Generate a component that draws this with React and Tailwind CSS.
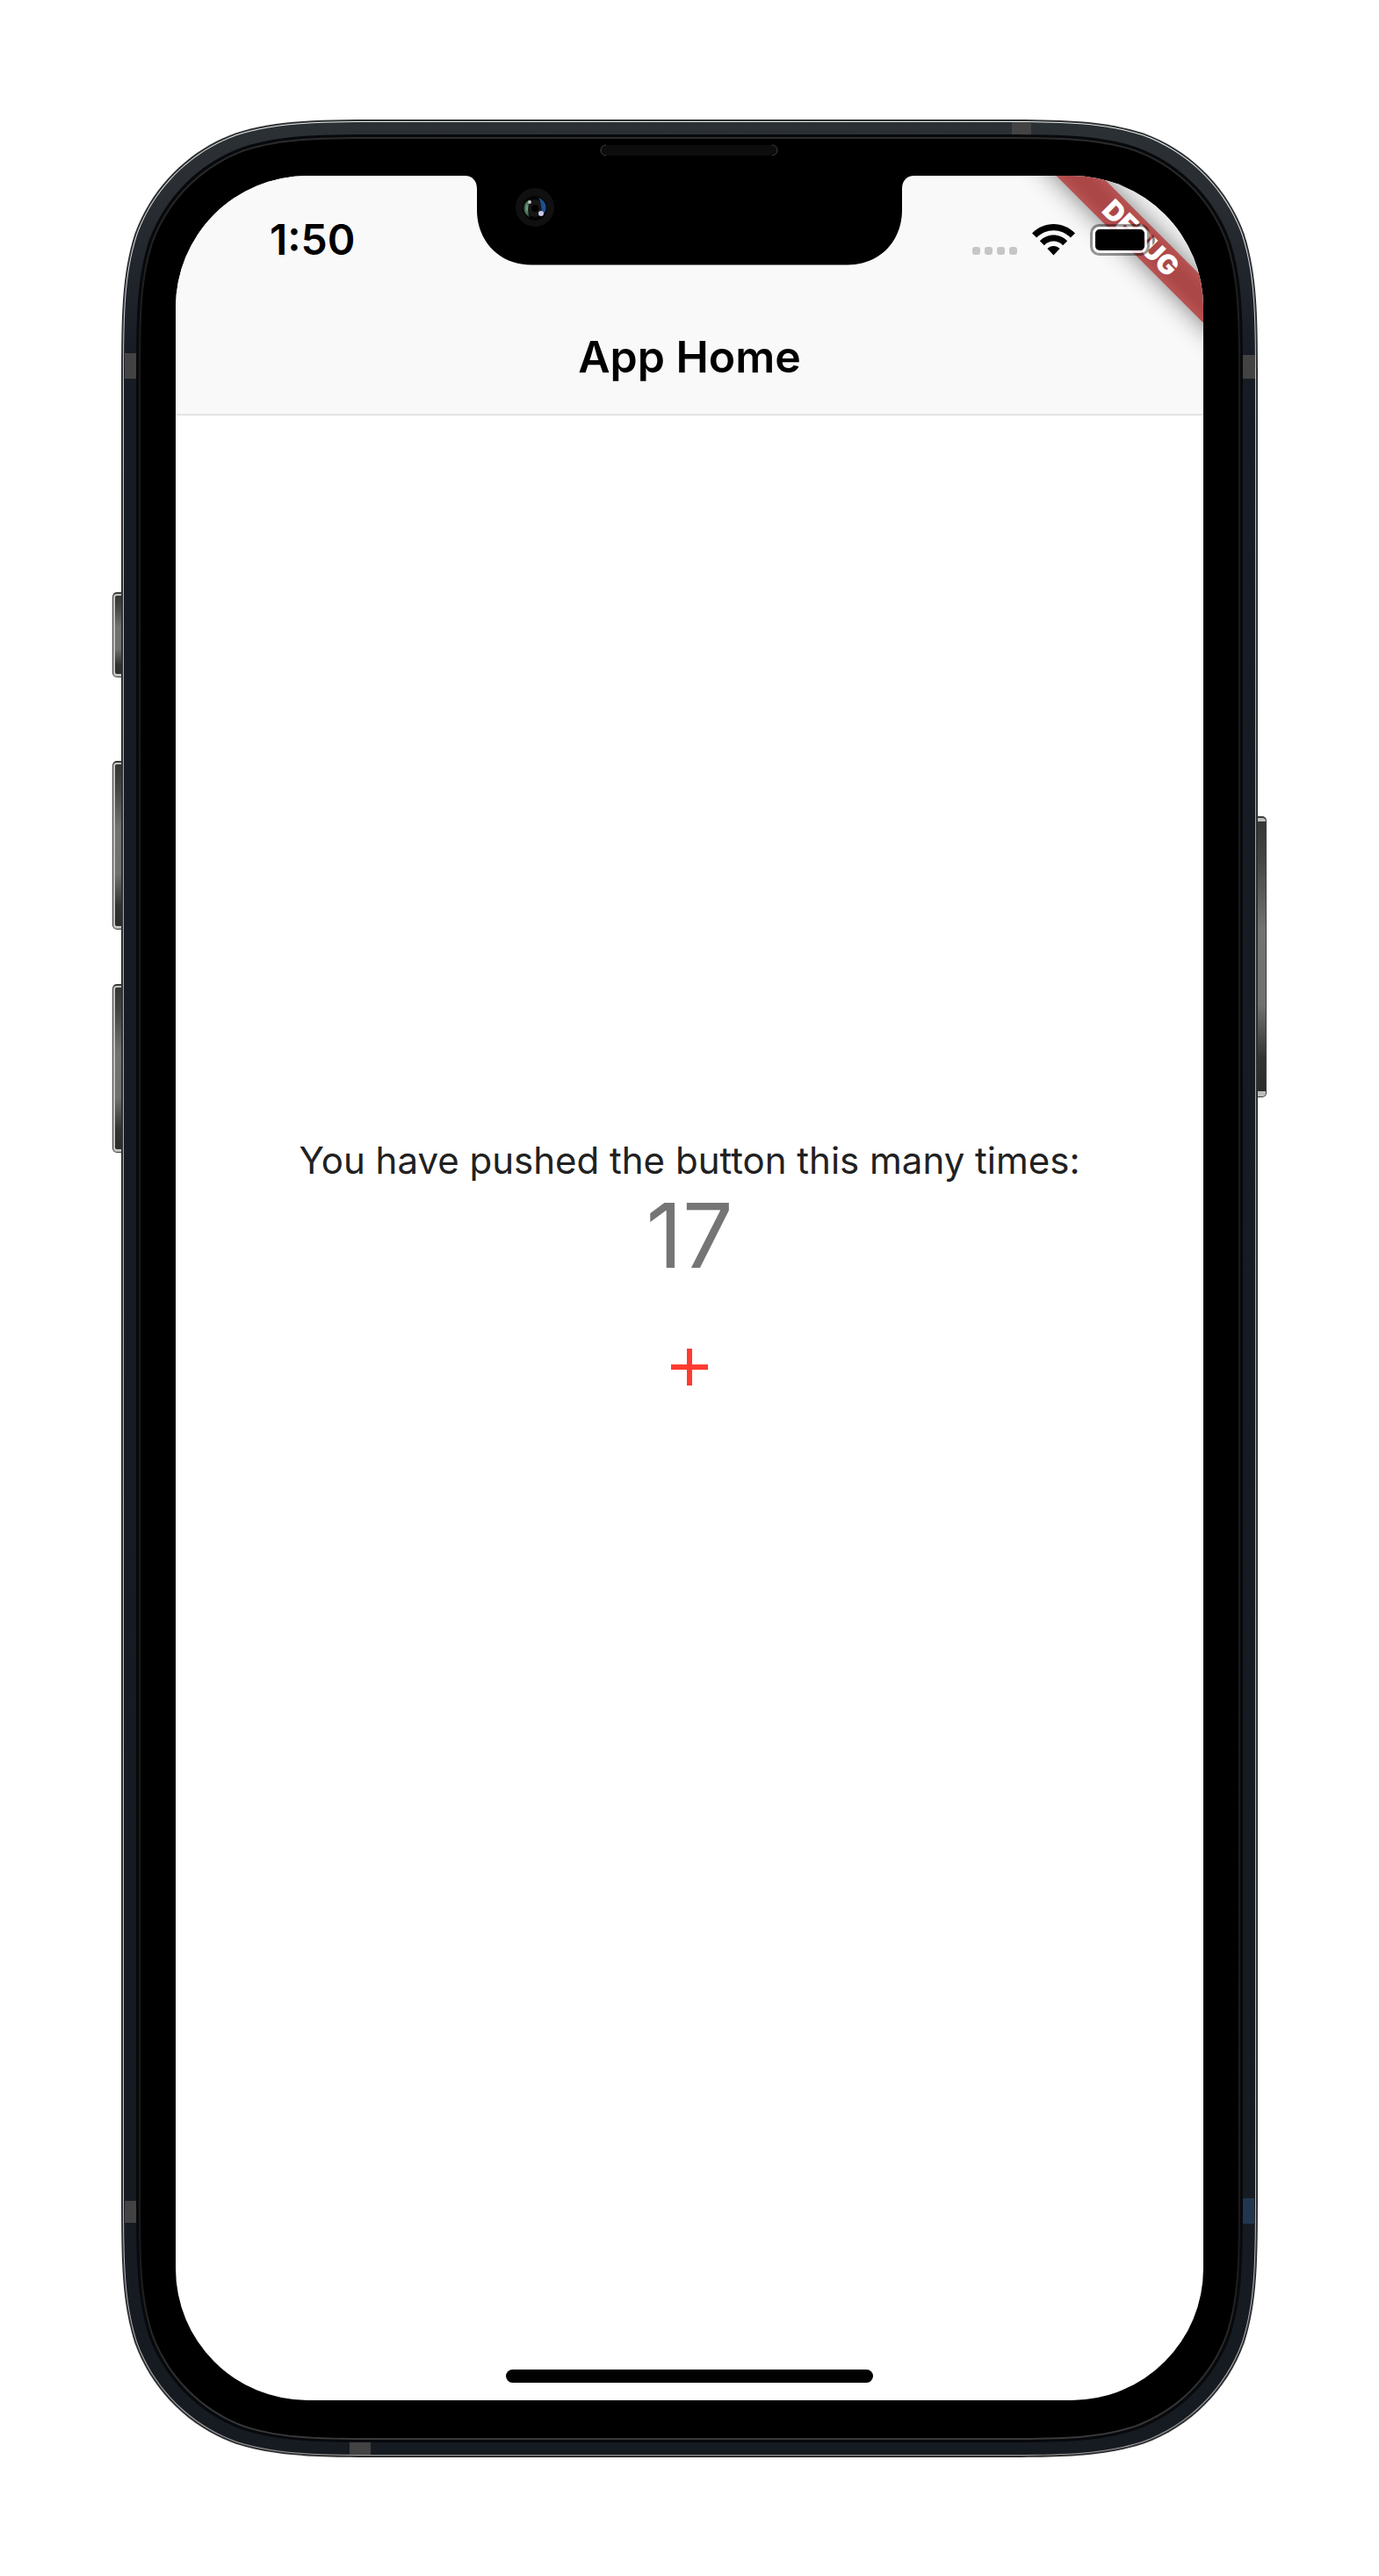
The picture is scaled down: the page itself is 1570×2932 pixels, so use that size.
import { useState } from "react";

const W = 1294;
const H = 2661;

/* Rounded rectangle with continuous-curvature corners, inset from the body. */
function squircle(inset, r) {
  const l = inset;
  const t = inset;
  const R = W - inset;
  const B = H - inset;
  const k = (n) => n * r;
  const a = k(1.528665), b = k(1.088493), c = k(0.868407), d = k(0.631494);
  const e = k(0.074911), f = k(0.372824), g = k(0.169059);
  return [
    `M${l + a} ${t}H${R - a}`,
    `C${R - b} ${t} ${R - c} ${t} ${R - d} ${t + e}`,
    `C${R - f} ${t + g} ${R - g} ${t + f} ${R - e} ${t + d}`,
    `C${R} ${t + c} ${R} ${t + b} ${R} ${t + a}V${B - a}`,
    `C${R} ${B - b} ${R} ${B - c} ${R - e} ${B - d}`,
    `C${R - g} ${B - f} ${R - f} ${B - g} ${R - d} ${B - e}`,
    `C${R - c} ${B} ${R - b} ${B} ${R - a} ${B}H${l + a}`,
    `C${l + b} ${B} ${l + c} ${B} ${l + d} ${B - e}`,
    `C${l + f} ${B - g} ${l + g} ${B - f} ${l + e} ${B - d}`,
    `C${l} ${B - c} ${l} ${B - b} ${l} ${B - a}V${t + a}`,
    `C${l} ${t + b} ${l} ${t + c} ${l + e} ${t + d}`,
    `C${l + g} ${t + f} ${l + f} ${t + g} ${l + d} ${t + e}`,
    `C${l + c} ${t} ${l + b} ${t} ${l + a} ${t}Z`,
  ].join("");
}

function SideButton({ x, y, h, right = false }) {
  return (
    <g>
      <rect x={x} y={y} width="16" height={h} rx="5" fill="#3c3c3c" />
      {right ? (
        <>
          <rect x={x} y={y + 2} width="15" height={h - 3} rx="4" fill="#bdbdbb" />
          <rect x={x} y={y + 6} width="15" height={h - 13} fill="url(#key)" />
        </>
      ) : (
        <>
          <rect x={x + 1} y={y + 2} width="14" height={h - 3} rx="4" fill="#c4c4c0" />
          <rect x={x + 3} y={y + 4} width="12" height={h - 8} rx="2" fill="url(#key)" />
        </>
      )}
    </g>
  );
}

function DeviceBody() {
  return (
    <svg
      aria-hidden="true"
      viewBox={`0 0 ${W} ${H}`}
      preserveAspectRatio="none"
      className="absolute inset-0 h-full w-full overflow-visible"
    >
      <defs>
        <linearGradient id="key" x1="0" y1="0" x2="0" y2="1">
          <stop offset="0" stopColor="#363636" />
          <stop offset="0.15" stopColor="#464646" />
          <stop offset="0.4" stopColor="#727272" />
          <stop offset="0.68" stopColor="#707070" />
          <stop offset="0.88" stopColor="#333333" />
          <stop offset="1" stopColor="#2c2c2c" />
        </linearGradient>
        <linearGradient id="band" x1="0" y1="0" x2="0" y2="1">
          <stop offset="0" stopColor="#2b3034" />
          <stop offset="0.03" stopColor="#2a2e33" />
          <stop offset="0.1" stopColor="#171c24" />
          <stop offset="1" stopColor="#161b22" />
        </linearGradient>
        <linearGradient id="rim" x1="0" y1="0" x2="0" y2="1">
          <stop offset="0" stopColor="#e4f0ec" />
          <stop offset="0.1" stopColor="#c6c8d4" />
          <stop offset="0.3" stopColor="#a2a4b8" />
          <stop offset="0.9" stopColor="#c0c2cc" />
          <stop offset="1" stopColor="#9a9a9a" />
        </linearGradient>
        <linearGradient id="lip" x1="0" y1="0" x2="0" y2="1">
          <stop offset="0" stopColor="#2c2c2c" />
          <stop offset="0.1" stopColor="#191919" />
          <stop offset="0.92" stopColor="#1a1a1a" />
          <stop offset="1" stopColor="#3a3a3a" />
        </linearGradient>
      </defs>
      <SideButton x={-10} y={538} h={97} />
      <SideButton x={-10} y={730} h={192} />
      <SideButton x={-10} y={984} h={192} />
      <SideButton x={1288} y={793} h={320} right />
      <path d={squircle(0, 206)} fill="#303032" />
      <path d={squircle(2, 204)} fill="url(#rim)" />
      <path d={squircle(3, 203)} fill="url(#band)" />
      <g fill="#434344">
        <rect x="4" y="266" width="14" height="29" />
        <rect x="1014" y="3" width="22" height="15" />
        <rect x="1275" y="268" width="16" height="27" />
        <rect x="4" y="2369" width="15" height="25" />
        <rect x="260" y="2642" width="24" height="16" />
      </g>
      <rect x="1275" y="2366" width="15" height="29" fill="#22374f" />
      <path d={squircle(17, 192)} fill="#07090c" />
      <path d={squircle(20, 190)} fill="url(#lip)" />
      <path d={squircle(22, 188)} fill="#000000" />
      <rect x="545" y="29" width="203" height="12" rx="6" fill="#0d0d0d" />
      <path d="M552 29a6 6 0 0 0 0 12M741 29a6 6 0 0 1 0 12" fill="none" stroke="#3b3b3b" strokeWidth="1" />
    </svg>
  );
}

function Notch() {
  return (
    <svg
      aria-hidden="true"
      viewBox="0 0 512 102"
      className="absolute top-0 left-1/2 h-[102px] w-[512px] -translate-x-1/2"
    >
      <defs>
        <radialGradient id="glassGreen">
          <stop offset="0" stopColor="#7fae90" />
          <stop offset="1" stopColor="#2a4434" />
        </radialGradient>
      </defs>
      <path d="M0 0C9 0 14 6 14 15V39C14 75 40 101.500 76 101.500H436C472 101.500 498 75 498 39V15C498 6 503 0 512 0Z" fill="#000" />
      <circle cx="80" cy="36" r="22" fill="#101010" />
      <circle cx="80" cy="37" r="14" fill="#040404" />
      <circle cx="80" cy="37" r="10" fill="#161616" />
      <path d="M75 27C65 30 65 43 74 47C71 41 72 34 75 27Z" fill="url(#glassGreen)" />
      <path d="M84 25C93 28 95 38 90 43C86 44 89 32 84 25Z" fill="#1d4f8f" />
      <circle cx="74" cy="30" r="2" fill="#b9c4bd" />
      <circle cx="87" cy="43" r="3" fill="#c9c8e6" />
      <circle cx="80" cy="37" r="4" fill="#000" />
    </svg>
  );
}

function DebugBanner() {
  return (
    <div className="absolute top-[53px] right-[-79px] h-9 w-[300px] rotate-45">
      <div className="absolute inset-0 bg-black/50 blur-[15px]" />
      <div className="relative flex h-9 items-center justify-center bg-[#b71c1c]/65 text-[31px] leading-9 font-black text-white">
        DEBUG
      </div>
    </div>
  );
}

function StatusBar() {
  return (
    <div className="relative flex h-[141px] items-center justify-between pt-1 pr-[53px] pl-[107px]">
      <time className="text-[48px] leading-[60px] font-semibold">1:50</time>
      <div className="flex items-end gap-[17px]">
        <div className="flex gap-[5px] pb-px" role="img" aria-label="No signal">
          <i className="size-[9px] rounded-[3px] bg-[#c6c6c6]" />
          <i className="size-[9px] rounded-[3px] bg-[#c6c6c6]" />
          <i className="size-[9px] rounded-[3px] bg-[#c6c6c6]" />
          <i className="size-[9px] rounded-[3px] bg-[#c6c6c6]" />
        </div>
        <svg role="img" aria-label="Wi-Fi" viewBox="0 0 49 36" className="h-9 w-[49px]">
          <path d="M0 10.500C13.500-3.500 35.500-3.500 49 10.500L43.800 15.500C33 4.500 16 4.500 5.200 15.500Z" />
          <path d="M8.800 19.200C17.500 10.200 31.500 10.200 40.200 19.200L35.200 24.200C29 18 20 18 13.800 24.200Z" />
          <path d="M17.400 28C21.500 24 27.500 24 31.600 28L24.500 35.500Z" />
        </svg>
        <svg role="img" aria-label="Battery full" viewBox="0 0 76 36" className="h-9 w-[76px]">
          <rect x="4.500" y="4.500" width="59" height="27" rx="6" fill="none" stroke="#fff" strokeOpacity="0.8" strokeWidth="3" />
          <rect x="1.500" y="1.500" width="65" height="33" rx="9" fill="none" stroke="#000" strokeOpacity="0.4" strokeWidth="3" />
          <rect x="6" y="6" width="56" height="24" rx="5" />
          <path d="M71 12C75 14 75 22 71 24Z" fillOpacity="0.45" />
        </svg>
      </div>
    </div>
  );
}

export default function App() {
  const [count, setCount] = useState(17);
  return (
    <div className="min-h-screen bg-white px-[138px] pt-[136px] pb-[135px] font-['Inter',sans-serif]">
      <div className="relative mx-auto flex min-h-[2661px] max-w-[1294px] flex-col px-[62px] pt-16 pb-[65px]">
        <DeviceBody />
        <div className="relative flex grow flex-col overflow-hidden rounded-[150px] bg-white text-black">
          <header className="border-b-2 border-[#e3e3e3] bg-[#f9f9f9]">
            <DebugBanner />
            <StatusBar />
            <h1 className="flex h-[130px] items-center justify-center text-[50px] leading-[60px] font-semibold">
              App Home
            </h1>
          </header>
          <main className="flex grow flex-col items-center justify-center pb-[252px]">
            <p className="text-[42px] leading-[50px] text-[#212121]">
              You have pushed the button this many times:
            </p>
            <output className="text-[102px] leading-[120px] text-[#757575]">{count}</output>
            <button
              type="button"
              aria-label="Increment"
              onClick={() => setCount(count + 1)}
              className="mt-6 flex size-[132px] items-center justify-center text-[#ff3b30]"
            >
              <svg viewBox="0 0 42 42" className="size-[42px]">
                <path d="M21 0V42M0 21H42" stroke="currentColor" strokeWidth="6" />
              </svg>
            </button>
          </main>
          <div className="mx-auto mb-5 h-[15px] w-[418px] rounded-full bg-black" />
          <Notch />
        </div>
      </div>
    </div>
  );
}
